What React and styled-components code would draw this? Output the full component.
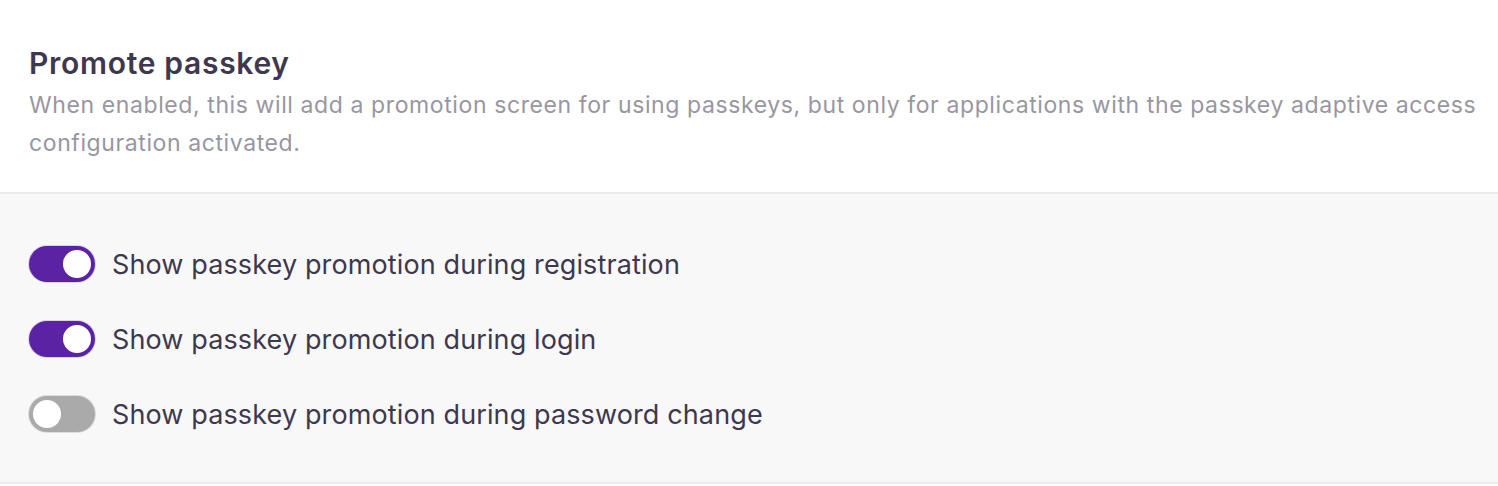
import React from "react";
import styled, { createGlobalStyle } from "styled-components";

const GlobalStyle = createGlobalStyle`
  body {
    margin: 0;
    background: #ffffff;
    font-family: Inter, "Noto Sans", sans-serif;
  }
`;

const Panel = styled.section`
  width: 1498px;
  height: 486px;
  background: #ffffff;
`;

const Header = styled.div`
  padding: 44px 18px 30px 29px;
  border-bottom: 2px solid #ebebeb;
`;

const Title = styled.h2`
  margin: 0 0 4px 0;
  font-size: 30px;
  line-height: 38px;
  font-weight: 600;
  color: #3e384e;
  letter-spacing: 0.7px;
`;

const Description = styled.p`
  margin: 0;
  font-size: 23px;
  line-height: 38px;
  color: #9896a1;
  letter-spacing: 0.6px;
`;

const Options = styled.div`
  display: flex;
  flex-direction: column;
  gap: 39px;
  padding: 52px 29px 0 29px;
  height: 290px;
  box-sizing: border-box;
  background: #f8f8f8;
  border-bottom: 2px solid #ebebeb;
`;

const Row = styled.label`
  display: flex;
  align-items: center;
  gap: 17px;
  height: 36px;
  font-size: 27px;
  letter-spacing: 0.12px;
  color: #3e384e;
  cursor: pointer;
`;

const Track = styled.span`
  position: relative;
  flex: none;
  width: 66px;
  height: 36px;
  border-radius: 18px;
  box-sizing: border-box;
  background: ${p => (p.on ? "#5b22a4" : "#aaaaaa")};
  box-shadow: 0 0 0 1px ${p => (p.on ? "#d8d4e4" : "#dcdcdc")};
`;

const Knob = styled.span`
  position: absolute;
  top: 2px;
  left: ${p => (p.on ? "32px" : "2px")};
  width: 32px;
  height: 32px;
  border-radius: 50%;
  background: #ffffff;
  box-sizing: border-box;
  border: 2px solid ${p => (p.on ? "#5b22a4" : "#aaaaaa")};
`;

const Toggle = ({ on }) => (
  <Track on={on ? 1 : 0}>
    <Knob on={on ? 1 : 0} />
  </Track>
);

const options = [
  { label: "Show passkey promotion during registration", on: true },
  { label: "Show passkey promotion during login", on: true },
  { label: "Show passkey promotion during password change", on: false },
];

export default function App() {
  return (
    <>
      <GlobalStyle />
      <Panel>
        <Header>
          <Title>Promote passkey</Title>
          <Description>
            When enabled, this will add a promotion screen for using passkeys,
            but only for applications with the passkey adaptive access
            configuration activated.
          </Description>
        </Header>
        <Options>
          {options.map(o => (
            <Row key={o.label}>
              <Toggle on={o.on} />
              <span>{o.label}</span>
            </Row>
          ))}
        </Options>
      </Panel>
    </>
  );
}
